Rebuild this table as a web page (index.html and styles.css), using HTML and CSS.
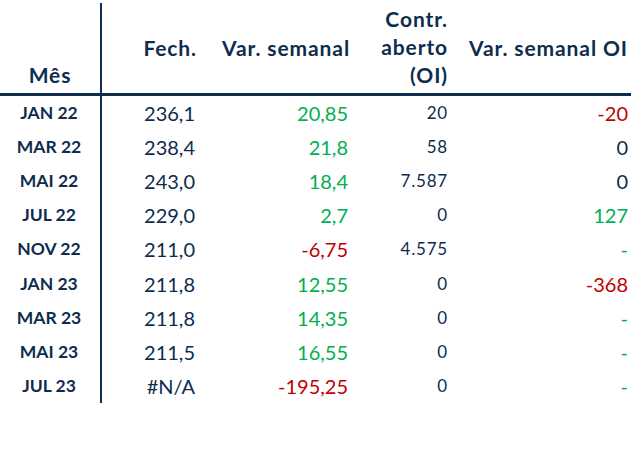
FILE: index.html
```html
<!DOCTYPE html>
<html lang="pt">
<head>
<meta charset="utf-8">
<link rel="stylesheet" href="styles.css">
</head>
<body>
<table class="tbl">
  <colgroup>
    <col class="c-mes">
    <col class="c-fech">
    <col class="c-var">
    <col class="c-oi">
    <col class="c-varoi">
  </colgroup>
  <thead>
    <tr>
      <th class="h-mes">Mês</th>
      <th class="h-fech">Fech.</th>
      <th class="h-var">Var. semanal</th>
      <th class="h-oi">Contr.<br>aberto<br>(OI)</th>
      <th class="h-varoi">Var. semanal OI</th>
    </tr>
  </thead>
  <tbody>
    <tr><td class="mes">JAN 22</td><td class="fech">236,1</td><td class="var pos">20,85</td><td class="oi">20</td><td class="varoi neg">-20</td></tr>
    <tr><td class="mes">MAR 22</td><td class="fech">238,4</td><td class="var pos">21,8</td><td class="oi">58</td><td class="varoi">0</td></tr>
    <tr><td class="mes">MAI 22</td><td class="fech">243,0</td><td class="var pos">18,4</td><td class="oi">7.587</td><td class="varoi">0</td></tr>
    <tr><td class="mes">JUL 22</td><td class="fech">229,0</td><td class="var pos">2,7</td><td class="oi">0</td><td class="varoi pos">127</td></tr>
    <tr><td class="mes">NOV 22</td><td class="fech">211,0</td><td class="var neg">-6,75</td><td class="oi">4.575</td><td class="varoi pos">-</td></tr>
    <tr><td class="mes">JAN 23</td><td class="fech">211,8</td><td class="var pos">12,55</td><td class="oi">0</td><td class="varoi neg">-368</td></tr>
    <tr><td class="mes">MAR 23</td><td class="fech">211,8</td><td class="var pos">14,35</td><td class="oi">0</td><td class="varoi pos">-</td></tr>
    <tr><td class="mes">MAI 23</td><td class="fech">211,5</td><td class="var pos">16,55</td><td class="oi">0</td><td class="varoi pos">-</td></tr>
    <tr><td class="mes">JUL 23</td><td class="fech">#N/A</td><td class="var neg">-195,25</td><td class="oi">0</td><td class="varoi pos">-</td></tr>
  </tbody>
</table>
</body>
</html>
```

FILE: styles.css
```css
html, body {
  margin: 0;
  padding: 0;
  background: #ffffff;
}

body {
  font-family: "Lato", "Open Sans", sans-serif;
  color: #0e2d4e;
}

.tbl {
  border-collapse: collapse;
  table-layout: fixed;
  width: 631px;
  margin-top: 3px;
}

.c-mes { width: 101px; }
.c-fech { width: 106px; }
.c-var { width: 150px; }
.c-oi { width: 96px; }
.c-varoi { width: 178px; }

th, td {
  padding: 0;
  white-space: nowrap;
}

thead th {
  height: 86px;
  font-size: 21px;
  font-weight: 700;
  letter-spacing: 0.9px;
  line-height: 28px;
  border-bottom: 3px solid #0e2d4e;
  vertical-align: middle;
}

.h-mes {
  text-align: center;
  vertical-align: bottom;
  padding-bottom: 4px;
  border-right: 2px solid #0e2d4e;
}

.h-fech {
  text-align: right;
  padding-right: 10px;
}

.h-var {
  text-align: right;
  padding-right: 7px;
}

thead th.h-oi {
  text-align: right;
  vertical-align: bottom;
  padding-bottom: 4px;
  padding-right: 5px;
}

.h-varoi {
  text-align: right;
  padding-right: 3px;
}

tbody td {
  height: 34.1px;
  font-size: 20px;
  line-height: 22px;
  vertical-align: middle;
}

td.mes {
  text-align: center;
  font-size: 17.5px;
  font-weight: 700;
  border-right: 2px solid #0e2d4e;
  padding-right: 2px;
}

td.fech {
  text-align: right;
  padding-right: 12px;
}

td.var {
  text-align: right;
  padding-right: 9px;
}

td.oi {
  text-align: right;
  font-size: 17px;
  letter-spacing: 0.8px;
  padding-right: 5px;
}

td.varoi {
  text-align: right;
  padding-right: 3px;
}

.pos { color: #00b050; }
.neg { color: #c00000; }
```
